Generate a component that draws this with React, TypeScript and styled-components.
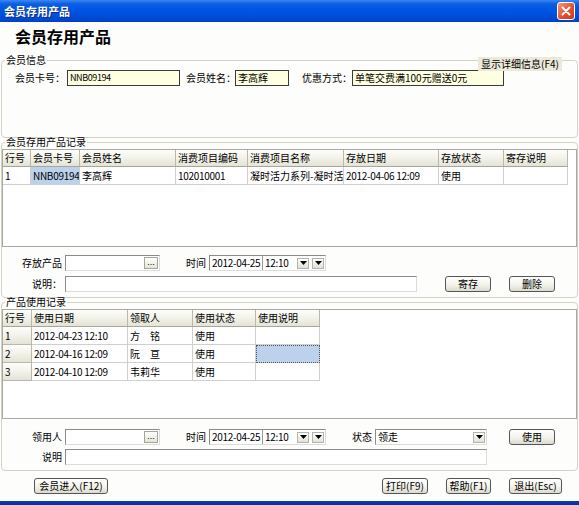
import React from 'react';
import styled, { createGlobalStyle } from 'styled-components';

const GlobalStyle = createGlobalStyle`
  html, body { margin: 0; padding: 0; background: #fff; }
  body {
    font-family: "Noto Sans CJK SC", "Noto Sans", sans-serif;
    font-size: 10px;
    color: #000;
  }
  * { box-sizing: border-box; }
`;

const Window = styled.div`
  width: 579px;
  height: 505px;
  display: flex;
  flex-direction: column;
  background: #fdfdfc;
  overflow: hidden;
`;

const TitleBar = styled.div`
  height: 22px;
  flex-shrink: 0;
  display: flex;
  align-items: center;
  justify-content: space-between;
  padding: 0 4px;
  background: linear-gradient(#3c86f2 0%, #0a5fe2 18%, #0054e3 50%, #004ad6 82%, #0040c0 100%);
`;

const TitleText = styled.span`
  color: #fff;
  font-weight: bold;
  font-size: 11px;
  line-height: 12px;
  text-shadow: 1px 1px 0 #0c2d80;
`;

const CloseButton = styled.div`
  width: 18px;
  height: 18px;
  border: 1px solid #fff;
  border-radius: 3px;
  background: linear-gradient(135deg, #f29a7b, #e0512f 55%, #c63b1c);
  display: flex;
  align-items: center;
  justify-content: center;
`;

const Body = styled.div`
  flex: 1;
  display: flex;
  flex-direction: column;
  padding: 0 1px;
`;

const PageTitle = styled.div`
  height: 33px;
  flex-shrink: 0;
  padding: 5px 0 0 14px;
  font-size: 16px;
  line-height: 18px;
  font-weight: bold;
`;

const Group = styled.fieldset<{ $h: number; $mt?: number }>`
  height: ${p => p.$h}px;
  margin: ${p => p.$mt ?? 0}px 0 0;
  padding: 0;
  min-width: 0;
  border: 1px solid #d3d2c6;
  border-radius: 4px;
  position: relative;
  display: flex;
  flex-direction: column;
  flex-shrink: 0;
`;

const Legend = styled.legend`
  margin-left: 3px;
  padding: 0 1px;
  height: 10px;
  font-size: 10px;
  line-height: 10px;
`;

const DetailButton = styled.div`
  position: absolute;
  top: -8px;
  right: 15px;
  width: 84px;
  height: 14px;
  background: #ece9d8;
  font-size: 10px;
  line-height: 14px;
  text-align: center;
`;

const FormRow = styled.div<{ $mt: number; $pl?: number }>`
  display: flex;
  align-items: center;
  height: 16px;
  margin-top: ${p => p.$mt}px;
  padding-left: ${p => p.$pl ?? 0}px;
`;

const Label = styled.span<{ $w: number; $left?: boolean; $ml?: number }>`
  width: ${p => p.$w}px;
  margin-left: ${p => p.$ml ?? 0}px;
  margin-right: 3px;
  flex-shrink: 0;
  text-align: ${p => (p.$left ? 'left' : 'right')};
  white-space: nowrap;
  line-height: 12px;
`;

const Num = styled.span`
  font-size: 9px;
  letter-spacing: -0.4px;
`;

const TextBox = styled.div<{ $w: number; $yellow?: boolean }>`
  width: ${p => p.$w}px;
  height: 16px;
  flex-shrink: 0;
  display: flex;
  align-items: center;
  padding: 0 2px;
  background: ${p => (p.$yellow ? '#ffffe1' : '#fff')};
  border: 1px solid;
  border-color: ${p => (p.$yellow ? '#3a3a3a' : '#8a8a8a #dcdcdc #dcdcdc #8a8a8a')};
  white-space: nowrap;
  overflow: hidden;
  line-height: 12px;
`;

const DotsButton = styled.div`
  width: 14px;
  height: 12px;
  margin-left: auto;
  margin-right: -1px;
  border: 1px solid #a5a59a;
  background: linear-gradient(#fff, #e6e4d8);
  font-family: "Liberation Sans", sans-serif;
  font-size: 9px;
  line-height: 8px;
  text-align: center;
`;

const DateTimeBox = styled.div`
  width: 117px;
  height: 16px;
  flex-shrink: 0;
  display: flex;
  align-items: center;
  background: #fff;
  border: 1px solid;
  border-color: #8a8a8a #dcdcdc #dcdcdc #8a8a8a;
  white-space: nowrap;
`;

const DatePart = styled.span`
  width: 53px;
  height: 100%;
  padding-left: 2px;
  border-right: 1px solid #9a9a9a;
  line-height: 14px;
  letter-spacing: -0.3px;
  overflow: hidden;
`;

const TimePart = styled.span`
  flex: 1;
  padding-left: 2px;
  line-height: 14px;
  letter-spacing: -0.3px;
`;

const SpinButton = styled.div`
  width: 12px;
  height: 11px;
  margin-right: 3px;
  border: 1px solid #b5b4aa;
  background: linear-gradient(#fff, #e3e1d6);
  display: flex;
  align-items: center;
  justify-content: center;
  &:last-child { margin-right: 1px; }
`;

const SelectBox = styled.div<{ $w: number }>`
  width: ${p => p.$w}px;
  height: 16px;
  flex-shrink: 0;
  display: flex;
  align-items: center;
  padding-left: 2px;
  background: #fff;
  border: 1px solid;
  border-color: #8a8a8a #dcdcdc #dcdcdc #8a8a8a;
  line-height: 12px;
  & > div { margin-left: auto; }
`;

const Button = styled.button<{ $w: number; $ml?: number }>`
  width: ${p => p.$w}px;
  height: 16px;
  margin: 0 0 0 ${p => p.$ml ?? 0}px;
  padding: 0;
  flex-shrink: 0;
  font-family: "Noto Sans CJK SC", "Noto Sans", sans-serif;
  font-size: 10px;
  line-height: 12px;
  color: #000;
  border: 1px solid #555;
  border-radius: 3px;
  background: linear-gradient(#ffffff, #f3f2ea 55%, #dddbcf);
  white-space: nowrap;
`;

const GridBox = styled.div<{ $h: number }>`
  height: ${p => p.$h}px;
  margin-top: 2px;
  flex-shrink: 0;
  border: 1px solid #a9a9a4;
  background: #fff;
  overflow: hidden;
`;

const Table = styled.table<{ $w: number }>`
  border-spacing: 0;
  table-layout: fixed;
  width: ${p => p.$w}px;
`;

const Col = styled.col<{ $w: number }>`
  width: ${p => p.$w}px;
`;

const headBg = 'linear-gradient(#fdfdfb 0%, #f3f2ea 50%, #e4e3d6 100%)';

const Th = styled.th`
  height: 17px;
  padding: 0 2px;
  font-weight: normal;
  text-align: left;
  line-height: 12px;
  white-space: nowrap;
  overflow: hidden;
  background: ${headBg};
  border-right: 1px solid #b9b8aa;
  border-bottom: 1px solid #a8a796;
`;

const Td = styled.td<{ $head?: boolean; $sel?: boolean; $focus?: boolean; $num?: boolean }>`
  height: 18px;
  padding: 0 0 0 2px;
  line-height: 12px;
  white-space: nowrap;
  overflow: hidden;
  letter-spacing: ${p => (p.$num ? '-0.3px' : 'normal')};
  background: ${p => (p.$sel ? '#bcd1ec' : p.$head ? headBg : '#fff')};
  border-right: 1px solid ${p => (p.$head ? '#b9b8aa' : '#cfcfcf')};
  border-bottom: 1px solid ${p => (p.$head ? '#b9b8aa' : '#cfcfcf')};
  outline: ${p => (p.$focus ? '1px dotted #555' : 'none')};
  outline-offset: -1px;
`;

const Footer = styled.div`
  height: 30px;
  flex-shrink: 0;
  display: flex;
  align-items: flex-start;
  padding: 7px 16px 0 33px;
`;

const FooterRight = styled.div`
  margin-left: auto;
  display: flex;
  gap: 18px;
`;

const BottomEdge = styled.div`
  height: 4px;
  flex-shrink: 0;
  background: linear-gradient(#0b3ea8, #0831a0);
`;

const Triangle = () => (
  <svg width="7" height="4" viewBox="0 0 7 4">
    <path d="M0 0H7L3.5 4Z" fill="#000" />
  </svg>
);

const PickBox = ({ w }: { w: number }) => (
  <TextBox $w={w}>
    <DotsButton>...</DotsButton>
  </TextBox>
);

const DateTime = () => (
  <DateTimeBox>
    <DatePart>2012-04-25</DatePart>
    <TimePart>12:10</TimePart>
    <SpinButton><Triangle /></SpinButton>
    <SpinButton><Triangle /></SpinButton>
  </DateTimeBox>
);

type Column = { title: string; w: number };

const depositCols: Column[] = [
  { title: '行号', w: 28 },
  { title: '会员卡号', w: 49 },
  { title: '会员姓名', w: 96 },
  { title: '消费项目编码', w: 72 },
  { title: '消费项目名称', w: 96 },
  { title: '存放日期', w: 95 },
  { title: '存放状态', w: 65 },
  { title: '寄存说明', w: 64 },
];

const depositRows = [
  ['1', 'NNB09194', '李高辉', '102010001', '凝时活力系列-凝时活', '2012-04-06 12:09', '使用', ''],
];

const useCols: Column[] = [
  { title: '行号', w: 29 },
  { title: '使用日期', w: 96 },
  { title: '领取人', w: 65 },
  { title: '使用状态', w: 63 },
  { title: '使用说明', w: 64 },
];

const useRows = [
  ['1', '2012-04-23 12:10', '方　铭', '使用', ''],
  ['2', '2012-04-16 12:09', '阮　亘', '使用', ''],
  ['3', '2012-04-10 12:09', '韦莉华', '使用', ''],
];

const isAscii = (v: string) => /^[\x20-\x7e]+$/.test(v);

interface GridProps {
  cols: Column[];
  rows: string[][];
  h: number;
  headRowNo?: boolean;
  sel?: [number, number];
  focus?: boolean;
}

const Grid = ({ cols, rows, h, headRowNo, sel, focus }: GridProps) => (
  <GridBox $h={h}>
    <Table $w={cols.reduce((s, c) => s + c.w, 0)}>
      <colgroup>
        {cols.map(c => <Col key={c.title} $w={c.w} />)}
      </colgroup>
      <thead>
        <tr>{cols.map(c => <Th key={c.title}>{c.title}</Th>)}</tr>
      </thead>
      <tbody>
        {rows.map((r, i) => (
          <tr key={i}>
            {r.map((v, j) => {
              const isSel = !!sel && sel[0] === i && sel[1] === j;
              return (
                <Td
                  key={j}
                  $head={headRowNo && j === 0}
                  $sel={isSel}
                  $focus={isSel && focus}
                  $num={isAscii(v)}
                >
                  {v}
                </Td>
              );
            })}
          </tr>
        ))}
      </tbody>
    </Table>
  </GridBox>
);

export default function App() {
  return (
    <Window>
      <GlobalStyle />
      <TitleBar>
        <TitleText>会员存用产品</TitleText>
        <CloseButton>
          <svg width="10" height="10" viewBox="0 0 10 10">
            <path d="M1.5 1.5L8.5 8.5M8.5 1.5L1.5 8.5" stroke="#fff" strokeWidth="2" strokeLinecap="round" />
          </svg>
        </CloseButton>
      </TitleBar>
      <Body>
        <PageTitle>会员存用产品</PageTitle>

        <Group $h={83}>
          <Legend>会员信息</Legend>
          <DetailButton>显示详细信息(F4)</DetailButton>
          <FormRow $mt={5} $pl={13}>
            <Label $w={49} $left>会员卡号：</Label>
            <TextBox $w={113} $yellow><Num>NNB09194</Num></TextBox>
            <Label $w={46} $ml={6} $left>会员姓名：</Label>
            <TextBox $w={54} $yellow>李高辉</TextBox>
            <Label $w={47} $ml={13} $left>优惠方式：</Label>
            <TextBox $w={152} $yellow>单笔交费满100元赠送0元</TextBox>
          </FormRow>
        </Group>

        <Group $h={161} $mt={-1}>
          <Legend>会员存用产品记录</Legend>
          <Grid cols={depositCols} rows={depositRows} h={98} sel={[0, 1]} />
          <FormRow $mt={8}>
            <Label $w={60}>存放产品</Label>
            <PickBox w={95} />
            <Label $w={46}>时间</Label>
            <DateTime />
          </FormRow>
          <FormRow $mt={5}>
            <Label $w={60}>说明：</Label>
            <TextBox $w={352} />
            <Button $w={46} $ml={28}>寄存</Button>
            <Button $w={46} $ml={18}>删除</Button>
          </FormRow>
        </Group>

        <Group $h={174} $mt={-1}>
          <Legend>产品使用记录</Legend>
          <Grid cols={useCols} rows={useRows} h={110} headRowNo sel={[1, 4]} focus />
          <FormRow $mt={10}>
            <Label $w={60}>领用人</Label>
            <PickBox w={95} />
            <Label $w={46}>时间</Label>
            <DateTime />
            <Label $w={46}>状态</Label>
            <SelectBox $w={112}>
              领走
              <SpinButton><Triangle /></SpinButton>
            </SelectBox>
            <Button $w={46} $ml={22}>使用</Button>
          </FormRow>
          <FormRow $mt={4}>
            <Label $w={60}>说明</Label>
            <TextBox $w={422} />
          </FormRow>
        </Group>

        <Footer>
          <Button $w={74}>会员进入(F12)</Button>
          <FooterRight>
            <Button $w={46}>打印(F9)</Button>
            <Button $w={45}>帮助(F1)</Button>
            <Button $w={53}>退出(Esc)</Button>
          </FooterRight>
        </Footer>
      </Body>
      <BottomEdge />
    </Window>
  );
}
